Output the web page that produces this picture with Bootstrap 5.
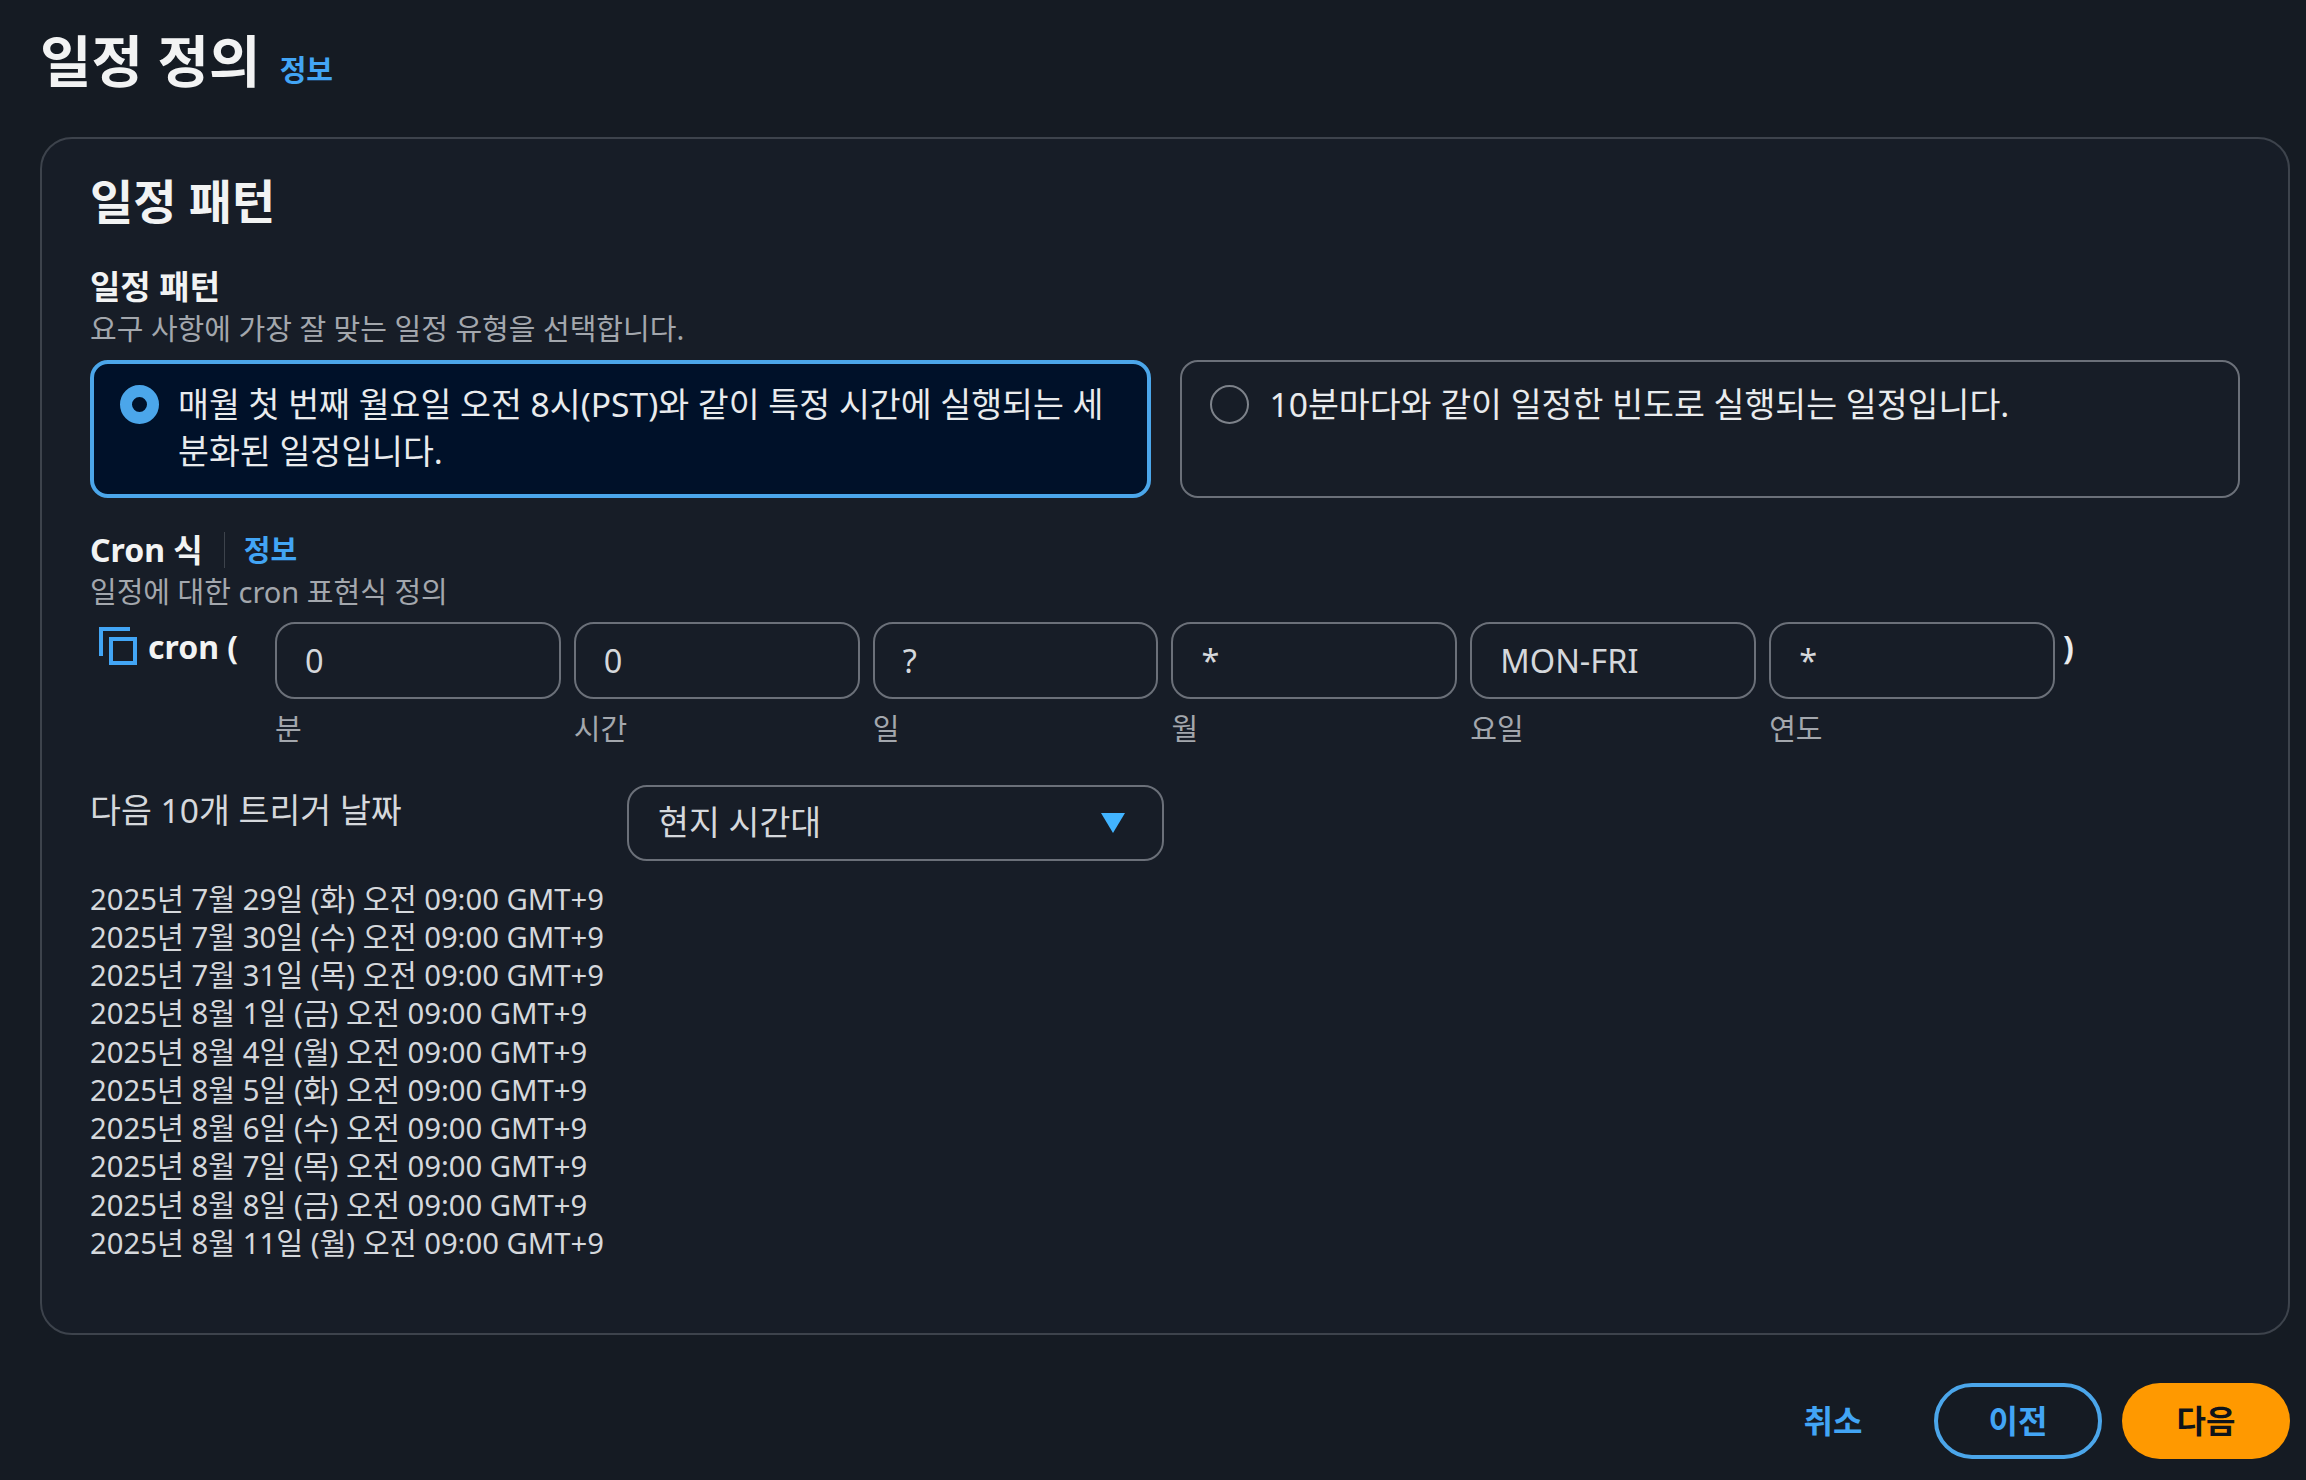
<!DOCTYPE html>
<html lang="ko">
<head>
    <meta charset="UTF-8">
    <meta name="viewport" content="width=device-width, initial-scale=1.0">
    <title>일정 정의</title>
    <link href="https://cdn.jsdelivr.net/npm/bootstrap@5.3.0/dist/css/bootstrap.min.css" rel="stylesheet">
    <style>
        body {
            background: #151b23;
            color: #e9ebed;
            font-family: "Noto Sans", "Noto Sans CJK KR", sans-serif;
            font-size: 30px;
            height: 1480px;
            overflow: hidden;
        }
        a { color: #42a5f5; text-decoration: none; font-weight: 700; }
        .page-wrap { padding: 24px 16px 0 40px; }
        .page-title { font-size: 56px; line-height: 72px; font-weight: 700; margin: 0; color: #f2f3f3; }
        .title-info { font-size: 29px; margin-left: 19px; position: relative; top: 10px; }
        .pattern-card {
            background: #171d27;
            border: 2px solid #3d434c;
            border-radius: 32px;
            margin-top: 41px;
            height: 1198px;
            padding: 32px 48px 0;
            color: #e9ebed;
        }
        .section-title { font-size: 47px; line-height: 60px; font-weight: 700; margin: 0 0 35px; color: #f2f3f3; }
        .field-label { font-size: 33px; line-height: 42px; font-weight: 700; color: #f2f3f3; }
        .field-desc { font-size: 29px; line-height: 36px; margin-top: 3px; color: #a3a7ad; }
        .tile {
            flex: 1 1 0;
            height: 138px;
            border: 2px solid #6b7079;
            border-radius: 18px;
            padding: 19px 28px 0 28px;
            gap: 21px;
            font-size: 33.6px;
            line-height: 47px;
            margin: 0;
        }
        .tile.selected { background: #001129; border: 4px solid #4ba6ea; padding: 17px 26px 0 26px; gap: 19px; }
        .tile .form-check-input {
            flex: none;
            width: 39px;
            height: 39px;
            margin: 4px 0 0;
            background-color: transparent;
            border: 2px solid #7d828a;
        }
        .tile .form-check-input:checked {
            background-color: #001129;
            background-image: none;
            border: 12px solid #4ba6ea;
        }
        .tile-row { gap: 29px; margin: 13px 0 31px; }
        .cron-label { font-size: 32px; }
        .cron-label a { font-size: 29px; }
        .info-sep { border-left: 1px solid #3d434c; height: 36px; margin: 0 19px 0 21px; }
        .cron-head { width: 185px; flex: none; padding: 5px 0 0 8px; gap: 10px; font-weight: 700; font-size: 32px; color: #f2f3f3; line-height: 40px; }
        .cron-row { margin-top: 12px; }
        .cron-fields { gap: 13px; width: 1780px; flex: none; }
        .cron-col { flex: 1 1 0; font-size: 29px; color: #a3a7ad; }
        .cron-input {
            height: 77px;
            background: transparent;
            border: 2px solid #6b7079;
            border-radius: 20px;
            color: #d5d8dc;
            font-size: 32.5px;
            padding: 0 28px;
            margin-bottom: 8px;
            box-shadow: none;
        }
        .cron-close { font-weight: 700; font-size: 32px; padding: 5px 0 0 8px; line-height: 40px; }
        .trigger-row { margin-top: 34px; }
        .trigger-label { width: 537px; flex: none; font-size: 33.6px; line-height: 42px; padding-top: 4px; color: #d5d8dc; }
        .zone-select {
            width: 537px;
            height: 76px;
            background-color: transparent;
            background-image: url("data:image/svg+xml,%3csvg xmlns='http://www.w3.org/2000/svg' viewBox='0 0 24 20'%3e%3cpath fill='%2342b4ff' d='M0 0h24L12 20z'/%3e%3c/svg%3e");
            background-size: 24px 20px;
            background-position: right 37px center;
            border: 2px solid #6b7079;
            border-radius: 20px;
            color: #d5d8dc;
            font-size: 33.6px;
            padding: 0 70px 0 29px;
        }
        .date-list { list-style: none; padding: 0; margin: 19px 0 0; font-size: 29.25px; line-height: 38.25px; color: #d5d8dc; }
        .action-row { margin-top: 48px; gap: 20px; }
        .action-btn { width: 168px; height: 76px; border-radius: 38px; font-size: 32px; font-weight: 700; padding: 0; }
        .btn-cancel { color: #42a5f5; border: 0; background: none; margin-right: 27px; width: 108px; }
        .btn-prev { color: #42a5f5; border: 4px solid #4ba6ea; background: transparent; }
        .btn-next { color: #0f141a; border: 0; background: #ff9900; }
    </style>
</head>
<body>
    <div class="page-wrap">
        <h1 class="page-title d-flex align-items-center">일정 정의<a class="title-info" href="#">정보</a></h1>

        <div class="card pattern-card">
            <h2 class="section-title">일정 패턴</h2>

            <div class="field-label">일정 패턴</div>
            <div class="field-desc">요구 사항에 가장 잘 맞는 일정 유형을 선택합니다.</div>
            <div class="d-flex tile-row">
                <label class="d-flex tile selected">
                    <input class="form-check-input" type="radio" name="pattern" checked>
                    <span>매월 첫 번째 월요일 오전 8시(PST)와 같이 특정 시간에 실행되는 세분화된 일정입니다.</span>
                </label>
                <label class="d-flex tile">
                    <input class="form-check-input" type="radio" name="pattern">
                    <span>10분마다와 같이 일정한 빈도로 실행되는 일정입니다.</span>
                </label>
            </div>

            <div class="field-label cron-label d-flex align-items-center">Cron 식<span class="info-sep"></span><a href="#">정보</a></div>
            <div class="field-desc">일정에 대한 cron 표현식 정의</div>

            <div class="d-flex cron-row">
                <div class="d-flex cron-head">
                    <svg width="40" height="40" viewBox="0 0 40 40" fill="none" stroke="#42a5f5" stroke-width="4">
                        <path d="M3 29V2H32"/>
                        <rect x="13" y="12" width="24" height="24"/>
                    </svg>
                    <span>cron (</span>
                </div>
                <div class="d-flex cron-fields">
                    <div class="cron-col"><input class="form-control cron-input" value="0">분</div>
                    <div class="cron-col"><input class="form-control cron-input" value="0">시간</div>
                    <div class="cron-col"><input class="form-control cron-input" value="?">일</div>
                    <div class="cron-col"><input class="form-control cron-input" value="*">월</div>
                    <div class="cron-col"><input class="form-control cron-input" value="MON-FRI">요일</div>
                    <div class="cron-col"><input class="form-control cron-input" value="*">연도</div>
                </div>
                <div class="cron-close">)</div>
            </div>

            <div class="d-flex trigger-row">
                <div class="trigger-label">다음 10개 트리거 날짜</div>
                <select class="form-select zone-select"><option>현지 시간대</option></select>
            </div>

            <ul class="date-list">
                <li>2025년 7월 29일 (화) 오전 09:00 GMT+9</li>
                <li>2025년 7월 30일 (수) 오전 09:00 GMT+9</li>
                <li>2025년 7월 31일 (목) 오전 09:00 GMT+9</li>
                <li>2025년 8월 1일 (금) 오전 09:00 GMT+9</li>
                <li>2025년 8월 4일 (월) 오전 09:00 GMT+9</li>
                <li>2025년 8월 5일 (화) 오전 09:00 GMT+9</li>
                <li>2025년 8월 6일 (수) 오전 09:00 GMT+9</li>
                <li>2025년 8월 7일 (목) 오전 09:00 GMT+9</li>
                <li>2025년 8월 8일 (금) 오전 09:00 GMT+9</li>
                <li>2025년 8월 11일 (월) 오전 09:00 GMT+9</li>
            </ul>
        </div>

        <div class="d-flex justify-content-end action-row">
            <button type="button" class="btn action-btn btn-cancel">취소</button>
            <button type="button" class="btn action-btn btn-prev">이전</button>
            <button type="button" class="btn action-btn btn-next">다음</button>
        </div>
    </div>
</body>
</html>
